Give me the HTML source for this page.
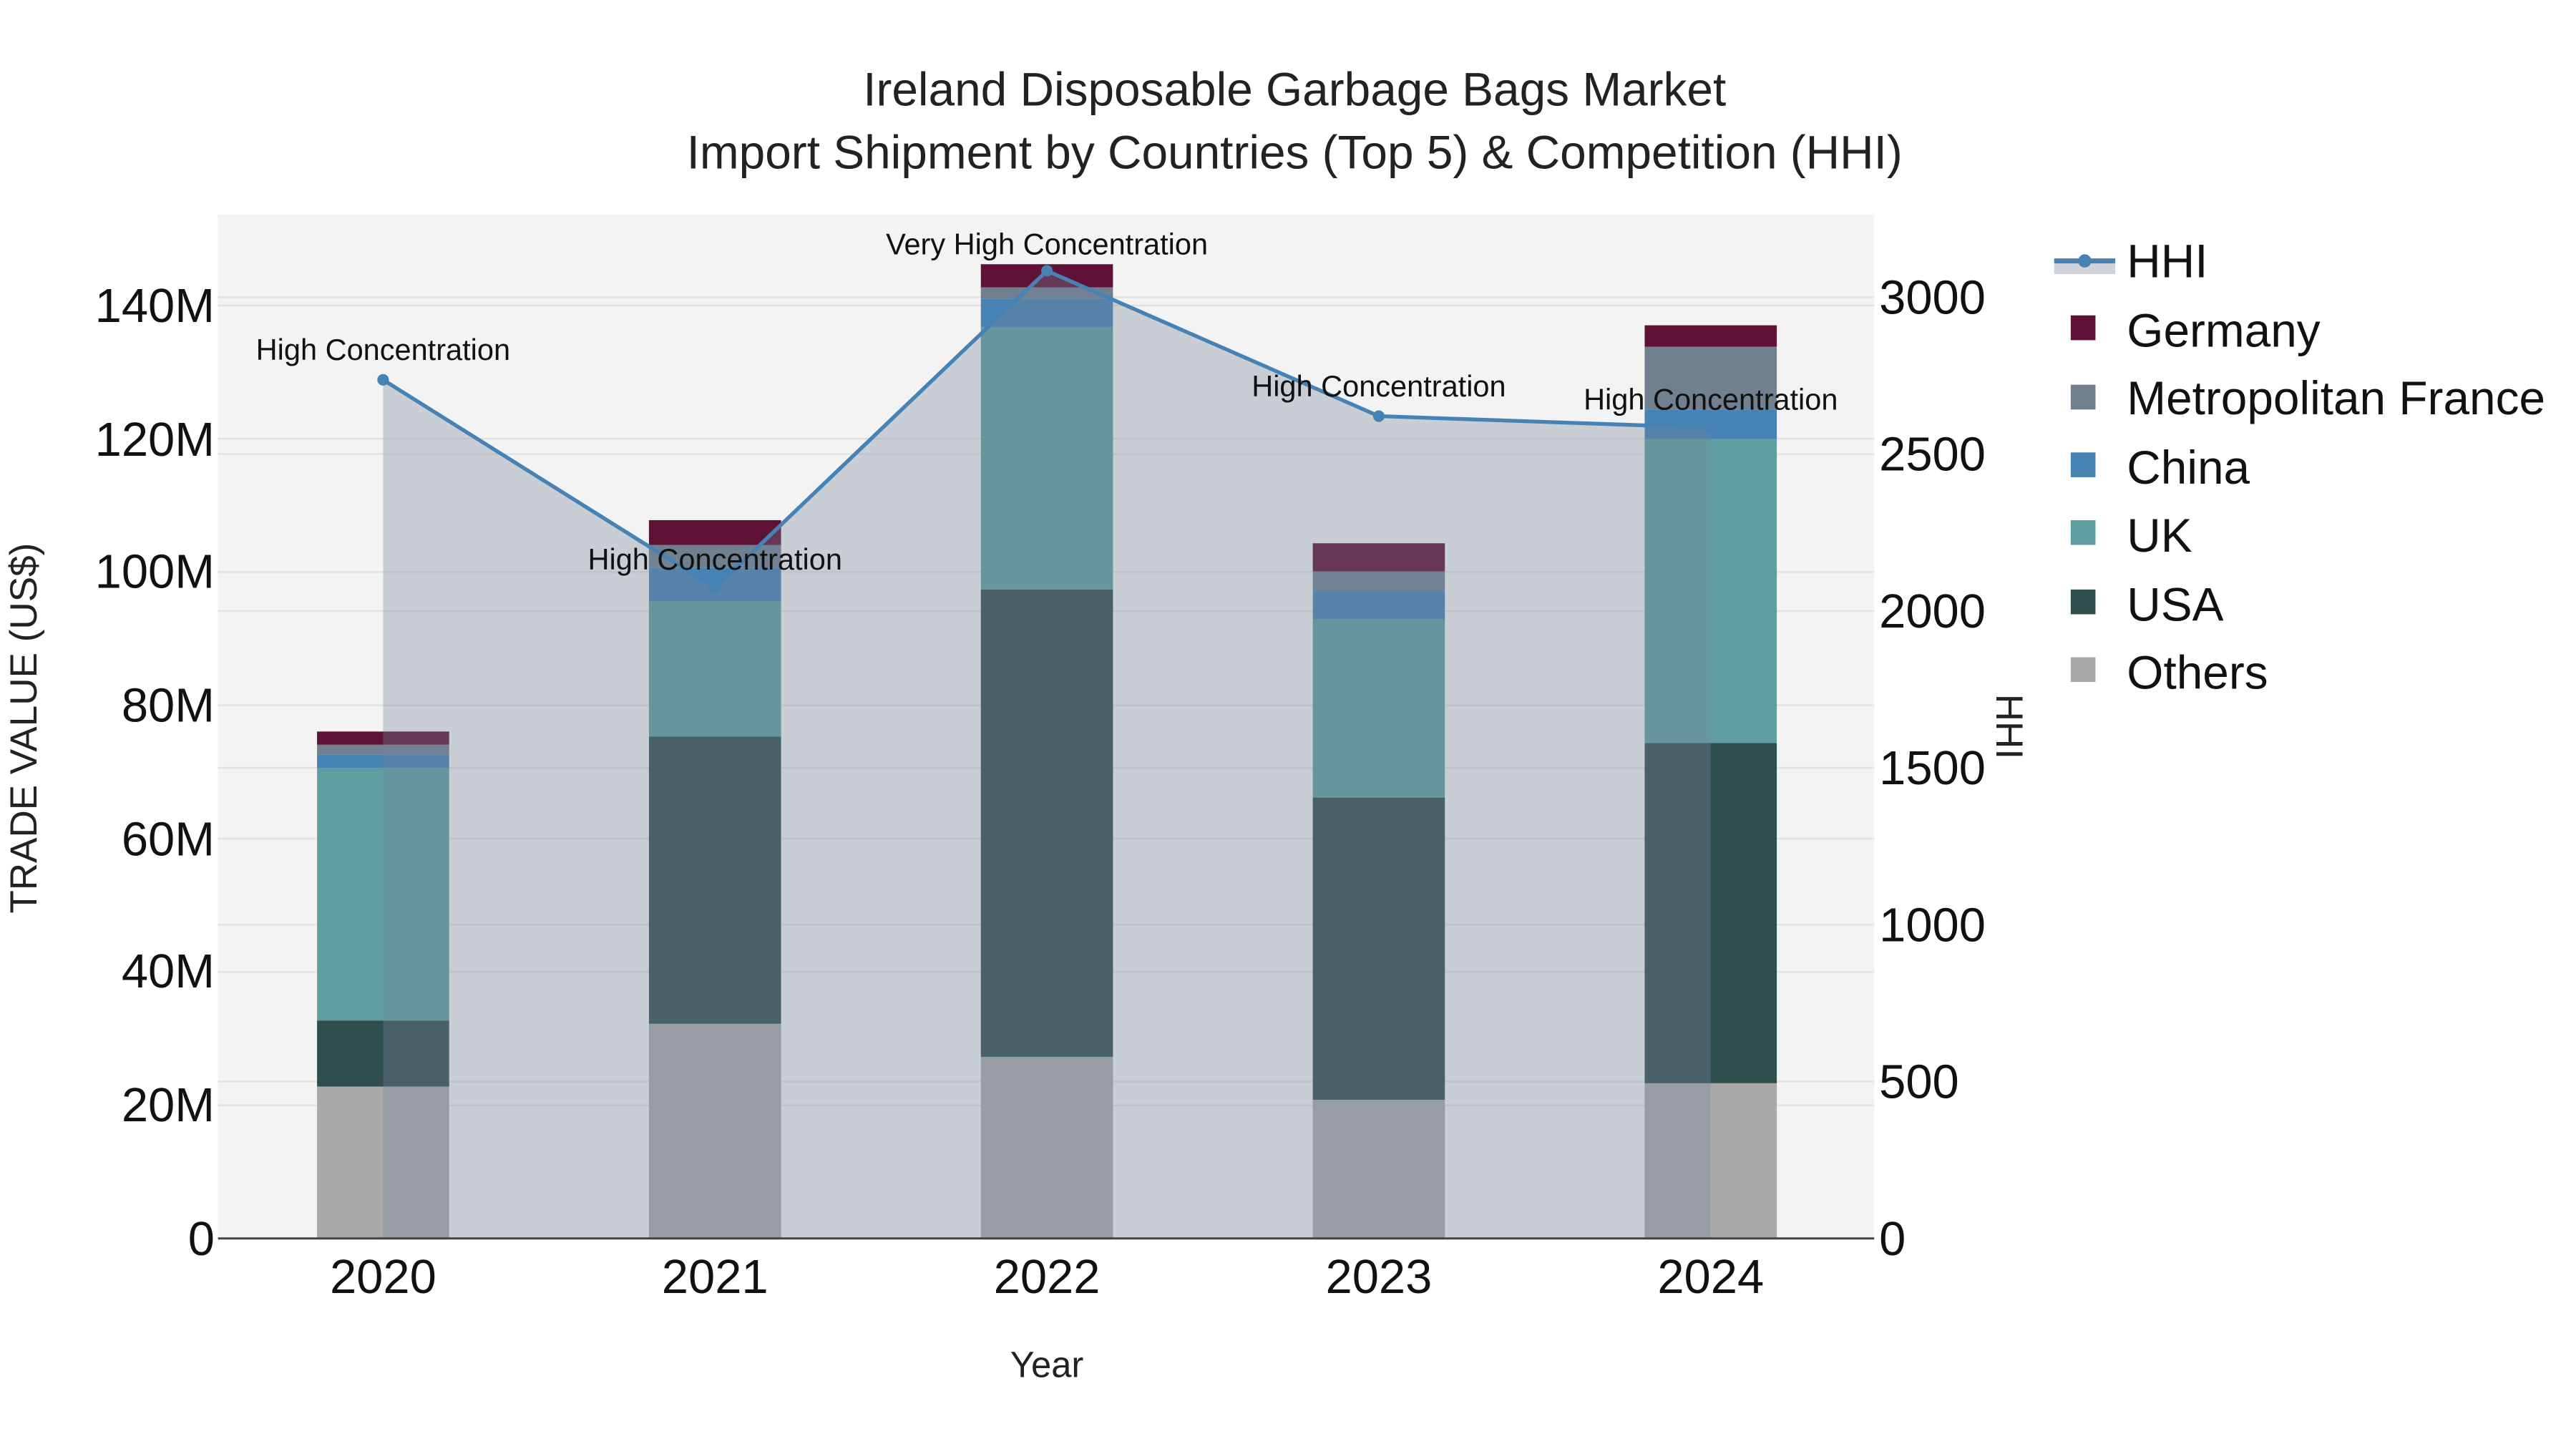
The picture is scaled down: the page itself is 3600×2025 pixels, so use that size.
<!DOCTYPE html>
<html><head><meta charset="utf-8"><style>html,body{margin:0;padding:0;background:#fff}svg{display:block}</style></head>
<body>
<svg width="3600" height="2025" viewBox="0 0 1560 877.5" xmlns="http://www.w3.org/2000/svg" font-family="Liberation Sans, Arial, sans-serif">
<rect x="0" y="0" width="1560" height="877.5" fill="#fff"/>
<rect x="132" y="130" width="1003" height="620" fill="#f3f3f3"/>
<g stroke="#e2e2e2" stroke-width="1">
<line x1="132" x2="1135" y1="669.3" y2="669.3"/><line x1="132" x2="1135" y1="588.6" y2="588.6"/><line x1="132" x2="1135" y1="507.9" y2="507.9"/><line x1="132" x2="1135" y1="427.1" y2="427.1"/><line x1="132" x2="1135" y1="346.4" y2="346.4"/><line x1="132" x2="1135" y1="265.7" y2="265.7"/><line x1="132" x2="1135" y1="185" y2="185"/>
<line x1="132" x2="1135" y1="655" y2="655"/><line x1="132" x2="1135" y1="560" y2="560"/><line x1="132" x2="1135" y1="465" y2="465"/><line x1="132" x2="1135" y1="370" y2="370"/><line x1="132" x2="1135" y1="275" y2="275"/><line x1="132" x2="1135" y1="180" y2="180"/>
</g>
<g>
<rect x="192" y="658" width="80" height="92" fill="#a9a9a9"/><rect x="192" y="618" width="80" height="40" fill="#2f4f4f"/><rect x="192" y="465" width="80" height="153" fill="#5f9ea0"/><rect x="192" y="457" width="80" height="8" fill="#4682b4"/><rect x="192" y="451" width="80" height="6" fill="#708090"/><rect x="192" y="443" width="80" height="8" fill="#5f1235"/>
<rect x="393" y="620" width="80" height="130" fill="#a9a9a9"/><rect x="393" y="446" width="80" height="174" fill="#2f4f4f"/><rect x="393" y="364" width="80" height="82" fill="#5f9ea0"/><rect x="393" y="344" width="80" height="20" fill="#4682b4"/><rect x="393" y="330" width="80" height="14" fill="#708090"/><rect x="393" y="315" width="80" height="15" fill="#5f1235"/>
<rect x="594" y="640" width="80" height="110" fill="#a9a9a9"/><rect x="594" y="357" width="80" height="283" fill="#2f4f4f"/><rect x="594" y="198" width="80" height="159" fill="#5f9ea0"/><rect x="594" y="181" width="80" height="17" fill="#4682b4"/><rect x="594" y="174" width="80" height="7" fill="#708090"/><rect x="594" y="160" width="80" height="14" fill="#5f1235"/>
<rect x="795" y="666" width="80" height="84" fill="#a9a9a9"/><rect x="795" y="483" width="80" height="183" fill="#2f4f4f"/><rect x="795" y="375" width="80" height="108" fill="#5f9ea0"/><rect x="795" y="358" width="80" height="17" fill="#4682b4"/><rect x="795" y="346" width="80" height="12" fill="#708090"/><rect x="795" y="329" width="80" height="17" fill="#5f1235"/>
<rect x="996" y="656" width="80" height="94" fill="#a9a9a9"/><rect x="996" y="450" width="80" height="206" fill="#2f4f4f"/><rect x="996" y="266" width="80" height="184" fill="#5f9ea0"/><rect x="996" y="248" width="80" height="18" fill="#4682b4"/><rect x="996" y="210" width="80" height="38" fill="#708090"/><rect x="996" y="197" width="80" height="13" fill="#5f1235"/>
</g>
<polygon points="232,230 433,356 634,164 835,252 1036,259 1036,750 232,750" fill="rgb(119,131,152)" fill-opacity="0.34"/>
<polyline points="232,230 433,356 634,164 835,252 1036,259" fill="none" stroke="#4682b4" stroke-width="2.3"/>
<g fill="#4682b4"><circle cx="232" cy="230" r="3.5"/><circle cx="433" cy="356" r="3.5"/><circle cx="634" cy="164" r="3.5"/><circle cx="835" cy="252" r="3.5"/><circle cx="1036" cy="259" r="3.5"/></g>
<line x1="132" x2="1135" y1="750" y2="750" stroke="#444" stroke-width="1.3"/>
<g font-size="18" fill="#111" text-anchor="middle">
<text x="232" y="218">High Concentration</text>
<text x="433" y="345">High Concentration</text>
<text x="634" y="154">Very High Concentration</text>
<text x="835" y="240">High Concentration</text>
<text x="1036" y="248">High Concentration</text>
</g>
<g font-size="28.5" fill="#222" text-anchor="middle">
<text x="784" y="64">Ireland Disposable Garbage Bags Market</text>
<text x="784" y="102">Import Shipment by Countries (Top 5) &amp; Competition (HHI)</text>
</g>
<g font-size="29" fill="#111" text-anchor="end">
<text x="130" y="760">0</text><text x="130" y="679">20M</text><text x="130" y="598">40M</text><text x="130" y="518">60M</text><text x="130" y="437">80M</text><text x="130" y="356">100M</text><text x="130" y="276">120M</text><text x="130" y="195">140M</text>
</g>
<g font-size="29" fill="#111" text-anchor="start">
<text x="1138" y="760">0</text><text x="1138" y="665">500</text><text x="1138" y="570">1000</text><text x="1138" y="475">1500</text><text x="1138" y="380">2000</text><text x="1138" y="285">2500</text><text x="1138" y="190">3000</text>
</g>
<g font-size="29" fill="#111" text-anchor="middle">
<text x="232" y="783">2020</text><text x="433" y="783">2021</text><text x="634" y="783">2022</text><text x="835" y="783">2023</text><text x="1036" y="783">2024</text>
</g>
<text x="634" y="834" font-size="22" fill="#222" text-anchor="middle">Year</text>
<text transform="translate(22,441) rotate(-90)" font-size="23" fill="#222" text-anchor="middle">TRADE VALUE (US$)</text>
<text transform="translate(1209,440) rotate(90)" font-size="23" fill="#222" text-anchor="middle">HHI</text>
<rect x="1244" y="158" width="37" height="8" fill="#d0d4da"/>
<line x1="1244" x2="1281" y1="158" y2="158" stroke="#4682b4" stroke-width="3"/>
<circle cx="1262.5" cy="158" r="4" fill="#4682b4"/>
<g>
<rect x="1254" y="191" width="15" height="15" fill="#5f1235"/>
<rect x="1254" y="233" width="15" height="15" fill="#708090"/>
<rect x="1254" y="274" width="15" height="15" fill="#4682b4"/>
<rect x="1254" y="315" width="15" height="15" fill="#5f9ea0"/>
<rect x="1254" y="357" width="15" height="15" fill="#2f4f4f"/>
<rect x="1254" y="398" width="15" height="15" fill="#a9a9a9"/>
</g>
<g font-size="28.5" fill="#111">
<text x="1288" y="168">HHI</text>
<text x="1288" y="210">Germany</text>
<text x="1288" y="251">Metropolitan France</text>
<text x="1288" y="293">China</text>
<text x="1288" y="334">UK</text>
<text x="1288" y="376">USA</text>
<text x="1288" y="417">Others</text>
</g>
</svg>
</body></html>
